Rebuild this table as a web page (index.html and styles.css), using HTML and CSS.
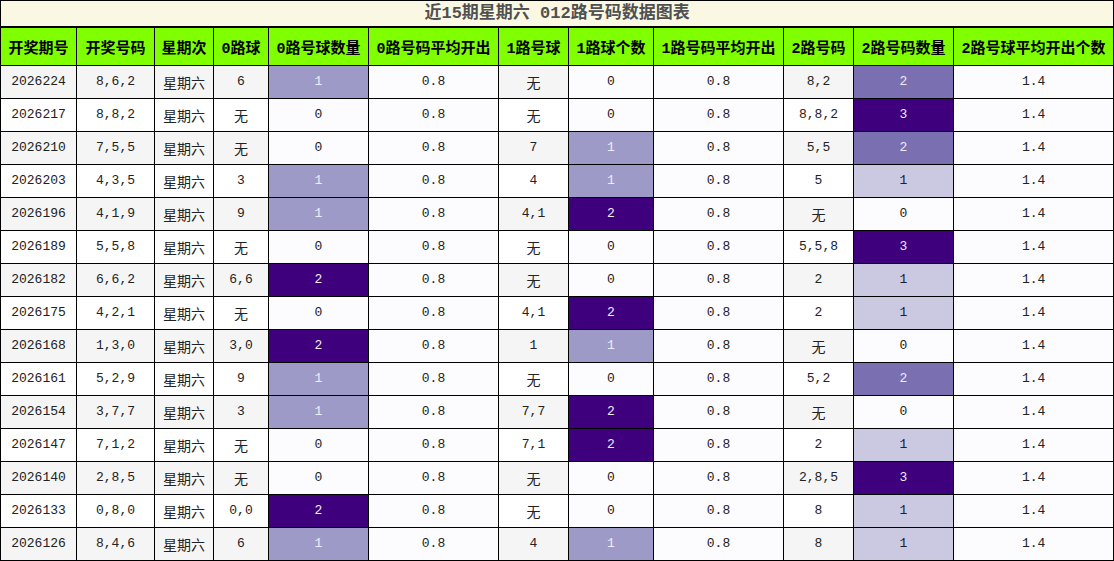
FILE: index.html
```html
<!DOCTYPE html>
<html lang="zh">
<head>
<meta charset="utf-8">
<link rel="stylesheet" href="styles.css">
</head>
<body>
<table class="chart">
<colgroup>
<col style="width:76px"><col style="width:78px"><col style="width:59px"><col style="width:55px"><col style="width:100px"><col style="width:130px"><col style="width:70px"><col style="width:85px"><col style="width:130px"><col style="width:70px"><col style="width:100px"><col style="width:160px">
</colgroup>
<thead>
<tr class="title-row"><th colspan="12">近15期星期六 012路号码数据图表</th></tr>
<tr class="head-row">
<th>开奖期号</th><th>开奖号码</th><th>星期次</th><th>0路球</th><th>0路号球数量</th><th>0路号码平均开出</th><th>1路号球</th><th>1路球个数</th><th>1路号码平均开出</th><th>2路号码</th><th>2路号码数量</th><th>2路号球平均开出个数</th>
</tr>
</thead>
<tbody>
<tr class="odd"><td class="t">2026224</td><td class="t">8,6,2</td><td class="t cjk">星期六</td><td class="t">6</td><td class="a1">1</td><td>0.8</td><td class="t cjk">无</td><td>0</td><td>0.8</td><td class="t">8,2</td><td class="b2">2</td><td>1.4</td></tr>
<tr><td class="t">2026217</td><td class="t">8,8,2</td><td class="t cjk">星期六</td><td class="t cjk">无</td><td>0</td><td>0.8</td><td class="t cjk">无</td><td>0</td><td>0.8</td><td class="t">8,8,2</td><td class="b3">3</td><td>1.4</td></tr>
<tr class="odd"><td class="t">2026210</td><td class="t">7,5,5</td><td class="t cjk">星期六</td><td class="t cjk">无</td><td>0</td><td>0.8</td><td class="t">7</td><td class="a1">1</td><td>0.8</td><td class="t">5,5</td><td class="b2">2</td><td>1.4</td></tr>
<tr><td class="t">2026203</td><td class="t">4,3,5</td><td class="t cjk">星期六</td><td class="t">3</td><td class="a1">1</td><td>0.8</td><td class="t">4</td><td class="a1">1</td><td>0.8</td><td class="t">5</td><td class="b1">1</td><td>1.4</td></tr>
<tr class="odd"><td class="t">2026196</td><td class="t">4,1,9</td><td class="t cjk">星期六</td><td class="t">9</td><td class="a1">1</td><td>0.8</td><td class="t">4,1</td><td class="a2">2</td><td>0.8</td><td class="t cjk">无</td><td>0</td><td>1.4</td></tr>
<tr><td class="t">2026189</td><td class="t">5,5,8</td><td class="t cjk">星期六</td><td class="t cjk">无</td><td>0</td><td>0.8</td><td class="t cjk">无</td><td>0</td><td>0.8</td><td class="t">5,5,8</td><td class="b3">3</td><td>1.4</td></tr>
<tr class="odd"><td class="t">2026182</td><td class="t">6,6,2</td><td class="t cjk">星期六</td><td class="t">6,6</td><td class="a2">2</td><td>0.8</td><td class="t cjk">无</td><td>0</td><td>0.8</td><td class="t">2</td><td class="b1">1</td><td>1.4</td></tr>
<tr><td class="t">2026175</td><td class="t">4,2,1</td><td class="t cjk">星期六</td><td class="t cjk">无</td><td>0</td><td>0.8</td><td class="t">4,1</td><td class="a2">2</td><td>0.8</td><td class="t">2</td><td class="b1">1</td><td>1.4</td></tr>
<tr class="odd"><td class="t">2026168</td><td class="t">1,3,0</td><td class="t cjk">星期六</td><td class="t">3,0</td><td class="a2">2</td><td>0.8</td><td class="t">1</td><td class="a1">1</td><td>0.8</td><td class="t cjk">无</td><td>0</td><td>1.4</td></tr>
<tr><td class="t">2026161</td><td class="t">5,2,9</td><td class="t cjk">星期六</td><td class="t">9</td><td class="a1">1</td><td>0.8</td><td class="t cjk">无</td><td>0</td><td>0.8</td><td class="t">5,2</td><td class="b2">2</td><td>1.4</td></tr>
<tr class="odd"><td class="t">2026154</td><td class="t">3,7,7</td><td class="t cjk">星期六</td><td class="t">3</td><td class="a1">1</td><td>0.8</td><td class="t">7,7</td><td class="a2">2</td><td>0.8</td><td class="t cjk">无</td><td>0</td><td>1.4</td></tr>
<tr><td class="t">2026147</td><td class="t">7,1,2</td><td class="t cjk">星期六</td><td class="t cjk">无</td><td>0</td><td>0.8</td><td class="t">7,1</td><td class="a2">2</td><td>0.8</td><td class="t">2</td><td class="b1">1</td><td>1.4</td></tr>
<tr class="odd"><td class="t">2026140</td><td class="t">2,8,5</td><td class="t cjk">星期六</td><td class="t cjk">无</td><td>0</td><td>0.8</td><td class="t cjk">无</td><td>0</td><td>0.8</td><td class="t">2,8,5</td><td class="b3">3</td><td>1.4</td></tr>
<tr><td class="t">2026133</td><td class="t">0,8,0</td><td class="t cjk">星期六</td><td class="t">0,0</td><td class="a2">2</td><td>0.8</td><td class="t cjk">无</td><td>0</td><td>0.8</td><td class="t">8</td><td class="b1">1</td><td>1.4</td></tr>
<tr class="odd"><td class="t">2026126</td><td class="t">8,4,6</td><td class="t cjk">星期六</td><td class="t">6</td><td class="a1">1</td><td>0.8</td><td class="t">4</td><td class="a1">1</td><td>0.8</td><td class="t">8</td><td class="b1">1</td><td>1.4</td></tr>
</tbody>
</table>
</body>
</html>
```
FILE: styles.css
```css
html, body {
  margin: 0;
  padding: 0;
  background: #ffffff;
}
.chart {
  width: 1114px;
  table-layout: fixed;
  border-collapse: collapse;
  font-family: "Liberation Mono", "Noto Sans CJK SC", monospace;
  font-size: 13px;
  color: #222;
}
.chart th, .chart td {
  border: 1px solid #000;
  padding: 0;
  text-align: center;
  vertical-align: middle;
  overflow: hidden;
  white-space: nowrap;
}
.title-row th {
  height: 25px;
  background: #faf8e3;
  color: #505050;
  font-size: 17px;
  font-weight: bold;
  border-bottom: 2px solid #000;
  line-height: 24px;
}
.head-row th {
  height: 37px;
  background: #7fff00;
  color: #000;
  font-size: 15px;
  font-weight: bold;
}
.chart tbody td {
  height: 32px;
  background: #fcfcff;
  line-height: 16px;
}
.chart tbody tr td.t {
  background: #ffffff;
}
.chart tbody tr.odd td.t {
  background: #f5f5f5;
}
.chart tbody td.cjk {
  font-size: 14px;
  padding-top: 3px;
  height: 29px;
}
.chart tbody td.a1 {
  background: #9e9ac8;
  color: #ececf6;
}
.chart tbody td.a2 {
  background: #3f007d;
  color: #ececf6;
}
.chart tbody td.b1 {
  background: #cbc9e2;
  color: #222;
}
.chart tbody td.b2 {
  background: #7a6fb1;
  color: #ececf6;
}
.chart tbody td.b3 {
  background: #3f007d;
  color: #ececf6;
}
```
